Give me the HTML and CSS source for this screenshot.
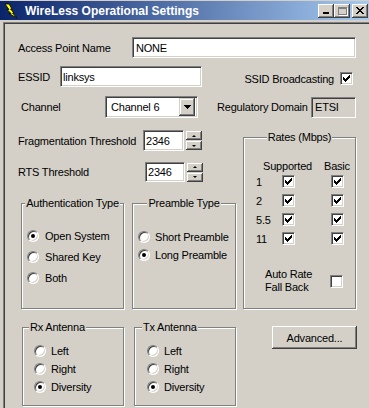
FILE: index.html
```html
<!DOCTYPE html>
<html lang="en">
<head>
    <meta charset="UTF-8">
    <title>WireLess Operational Settings</title>
    <link rel="stylesheet" href="styles.css">
</head>
<body>
    <div class="window">
        <div class="titlebar">
            <svg class="title-icon" width="14" height="16" viewBox="0 0 14 16">
                <polygon points="1,1 5,1 8,6 6.5,6 10,10 8.5,10 13,15 5,10.5 7,10.5 3,6.5 5,6.5" fill="#ffff00" stroke="#000" stroke-width="0.8"/>
            </svg>
            <span class="title">WireLess Operational Settings</span>
            <div class="caption-buttons">
                <div class="caption-btn btn-min"><span class="min-bar"></span></div>
                <div class="caption-btn btn-max"><span class="max-box"></span></div>
                <div class="caption-btn btn-close">
                    <svg width="8" height="7" viewBox="0 0 8 7">
                        <path d="M0 0h2v1h-2z M6 0h2v1h-2z M1 1h2v1h-2z M5 1h2v1h-2z M2 2h4v1h-4z M3 3h2v1h-2z M2 4h4v1h-4z M1 5h2v1h-2z M5 5h2v1h-2z M0 6h2v1h-2z M6 6h2v1h-2z" fill="#000"/>
                    </svg>
                </div>
            </div>
        </div>

        <div class="client">
            <div class="row row-ap">
                <span class="lbl-ap">Access Point Name</span>
                <div class="edit edit-ap">NONE</div>
            </div>

            <div class="row row-essid">
                <span class="lbl-essid">ESSID</span>
                <div class="edit edit-essid">linksys</div>
                <div class="ssid">
                    <span>SSID Broadcasting</span>
                    <span class="check"><svg class="tick" width="7" height="7" viewBox="0 0 7 7"><path d="M0 2h1v3h-1z M1 3h1v3h-1z M2 4h1v3h-1z M3 3h1v3h-1z M4 2h1v3h-1z M5 1h1v3h-1z M6 0h1v3h-1z"/></svg></span>
                </div>
            </div>

            <div class="row row-channel">
                <span class="lbl-channel">Channel</span>
                <div class="combo">
                    <span class="combo-text">Channel 6</span>
                    <span class="combo-btn">
                        <svg width="7" height="4" viewBox="0 0 7 4">
                            <path d="M0 0h7v1h-7z M1 1h5v1h-5z M2 2h3v1h-3z M3 3h1v1h-1z" fill="#000"/>
                        </svg>
                    </span>
                </div>
                <span class="lbl-domain">Regulatory Domain</span>
                <div class="edit edit-domain">ETSI</div>
            </div>

            <div class="lower">
                <div class="left-col">
                    <div class="row row-frag">
                        <span class="lbl-frag">Fragmentation Threshold</span>
                        <div class="edit edit-frag">2346</div>
                        <div class="spinner">
                            <span class="spin-btn spin-up"></span>
                            <span class="spin-btn spin-down"></span>
                        </div>
                    </div>

                    <div class="row row-rts">
                        <span class="lbl-rts">RTS Threshold</span>
                        <div class="edit edit-rts">2346</div>
                        <div class="spinner">
                            <span class="spin-btn spin-up"></span>
                            <span class="spin-btn spin-down"></span>
                        </div>
                    </div>

                    <div class="group-row">
                        <fieldset class="group group-auth">
                            <legend>Authentication Type</legend>
                            <div class="group-body">
                                <div class="radio-row"><span class="radio checked"></span>Open System</div>
                                <div class="radio-row"><span class="radio"></span>Shared Key</div>
                                <div class="radio-row"><span class="radio"></span>Both</div>
                            </div>
                        </fieldset>
                        <fieldset class="group group-preamble">
                            <legend>Preamble Type</legend>
                            <div class="group-body">
                                <div class="radio-row"><span class="radio"></span>Short Preamble</div>
                                <div class="radio-row"><span class="radio checked"></span>Long Preamble</div>
                            </div>
                        </fieldset>
                    </div>

                    <div class="antenna-row">
                        <fieldset class="group group-rx">
                            <legend>Rx Antenna</legend>
                            <div class="group-body">
                                <div class="radio-row"><span class="radio"></span>Left</div>
                                <div class="radio-row"><span class="radio"></span>Right</div>
                                <div class="radio-row"><span class="radio checked"></span>Diversity</div>
                            </div>
                        </fieldset>
                        <fieldset class="group group-tx">
                            <legend>Tx Antenna</legend>
                            <div class="group-body">
                                <div class="radio-row"><span class="radio"></span>Left</div>
                                <div class="radio-row"><span class="radio"></span>Right</div>
                                <div class="radio-row"><span class="radio checked"></span>Diversity</div>
                            </div>
                        </fieldset>
                    </div>
                </div>

                <div class="right-col">
                    <fieldset class="group group-rates">
                        <legend>Rates (Mbps)</legend>
                        <div class="group-body">
                            <div class="rates-head">
                                <span class="head-supported">Supported</span>
                                <span>Basic</span>
                            </div>
                            <div class="rate-row">
                                <span class="rate-num">1</span>
                                <span class="check"><svg class="tick" width="7" height="7" viewBox="0 0 7 7"><path d="M0 2h1v3h-1z M1 3h1v3h-1z M2 4h1v3h-1z M3 3h1v3h-1z M4 2h1v3h-1z M5 1h1v3h-1z M6 0h1v3h-1z"/></svg></span>
                                <span class="check basic"><svg class="tick" width="7" height="7" viewBox="0 0 7 7"><path d="M0 2h1v3h-1z M1 3h1v3h-1z M2 4h1v3h-1z M3 3h1v3h-1z M4 2h1v3h-1z M5 1h1v3h-1z M6 0h1v3h-1z"/></svg></span>
                            </div>
                            <div class="rate-row">
                                <span class="rate-num">2</span>
                                <span class="check"><svg class="tick" width="7" height="7" viewBox="0 0 7 7"><path d="M0 2h1v3h-1z M1 3h1v3h-1z M2 4h1v3h-1z M3 3h1v3h-1z M4 2h1v3h-1z M5 1h1v3h-1z M6 0h1v3h-1z"/></svg></span>
                                <span class="check basic"><svg class="tick" width="7" height="7" viewBox="0 0 7 7"><path d="M0 2h1v3h-1z M1 3h1v3h-1z M2 4h1v3h-1z M3 3h1v3h-1z M4 2h1v3h-1z M5 1h1v3h-1z M6 0h1v3h-1z"/></svg></span>
                            </div>
                            <div class="rate-row">
                                <span class="rate-num">5.5</span>
                                <span class="check"><svg class="tick" width="7" height="7" viewBox="0 0 7 7"><path d="M0 2h1v3h-1z M1 3h1v3h-1z M2 4h1v3h-1z M3 3h1v3h-1z M4 2h1v3h-1z M5 1h1v3h-1z M6 0h1v3h-1z"/></svg></span>
                                <span class="check basic"><svg class="tick" width="7" height="7" viewBox="0 0 7 7"><path d="M0 2h1v3h-1z M1 3h1v3h-1z M2 4h1v3h-1z M3 3h1v3h-1z M4 2h1v3h-1z M5 1h1v3h-1z M6 0h1v3h-1z"/></svg></span>
                            </div>
                            <div class="rate-row">
                                <span class="rate-num">11</span>
                                <span class="check"><svg class="tick" width="7" height="7" viewBox="0 0 7 7"><path d="M0 2h1v3h-1z M1 3h1v3h-1z M2 4h1v3h-1z M3 3h1v3h-1z M4 2h1v3h-1z M5 1h1v3h-1z M6 0h1v3h-1z"/></svg></span>
                                <span class="check basic"><svg class="tick" width="7" height="7" viewBox="0 0 7 7"><path d="M0 2h1v3h-1z M1 3h1v3h-1z M2 4h1v3h-1z M3 3h1v3h-1z M4 2h1v3h-1z M5 1h1v3h-1z M6 0h1v3h-1z"/></svg></span>
                            </div>
                            <div class="fallback">
                                <span class="fallback-text">Auto Rate<br>Fall Back</span>
                                <span class="check"></span>
                            </div>
                        </div>
                    </fieldset>
                    <div class="button btn-advanced">Advanced...</div>
                </div>
            </div>
        </div>
    </div>
</body>
</html>
```

FILE: styles.css
```css
* {
    box-sizing: border-box;
}

body {
    margin: 0;
    background: #d4d0c8;
    font-family: "Liberation Sans", Arial, sans-serif;
    font-size: 11px;
    letter-spacing: -0.2px;
    color: #000;
    overflow: hidden;
}

.window {
    width: 369px;
    height: 408px;
    padding-top: 1px;
}

/* title bar */

.titlebar {
    height: 19px;
    display: flex;
    align-items: center;
    padding: 0 1px 0 4px;
    background: linear-gradient(to right, #0a246a, #a6caf0);
}

.title-icon {
    flex: none;
}

.title {
    margin-left: 7px;
    color: #fff;
    font-weight: bold;
    font-size: 12px;
    letter-spacing: 0;
}

.caption-buttons {
    margin-left: auto;
    display: flex;
}

.caption-btn {
    width: 16px;
    height: 14px;
    background: #d4d0c8;
    box-shadow: inset -1px -1px #404040, inset 1px 1px #fff, inset -2px -2px #808080, inset 2px 2px #d4d0c8;
    display: flex;
    align-items: center;
    justify-content: center;
}

.btn-close {
    margin-left: 2px;
}

.min-bar {
    width: 6px;
    height: 2px;
    background: #000;
    margin-top: 5px;
    margin-right: 1px;
}

.max-box {
    width: 9px;
    height: 8px;
    border: 1px solid #808080;
    border-top-width: 2px;
    box-shadow: 1px 1px 0 #fff;
}

/* client area */

.client {
    margin: 2px 0 0 3px;
    height: 386px;
    border-top: 1px solid #808080;
    border-left: 1px solid #808080;
    box-shadow: inset 1px 1px #404040;
    padding-left: 14px;
}

.row {
    display: flex;
    align-items: center;
    white-space: nowrap;
}

.row-ap,
.row-essid,
.row-channel {
    width: 338px;
}

.row-ap {
    margin-top: 14px;
    height: 21px;
}

.lbl-ap {
    width: 114px;
}

.edit {
    height: 21px;
    background: #fff;
    border: 1px solid;
    border-color: #808080 #fff #fff #808080;
    box-shadow: inset 1px 1px #404040, inset -1px -1px #d4d0c8;
    padding: 0 3px;
    display: flex;
    align-items: center;
    flex: none;
}

.edit-ap {
    width: 224px;
}

.row-essid {
    margin-top: 8px;
    height: 21px;
}

.lbl-essid {
    width: 42px;
}

.edit-essid {
    width: 142px;
    padding-left: 2px;
}

.ssid {
    margin-left: auto;
    margin-right: 3px;
    margin-top: 4px;
    display: flex;
    align-items: center;
    gap: 6px;
}

.row-channel {
    margin-top: 9px;
    height: 22px;
}

.lbl-channel {
    width: 87px;
    padding-left: 3px;
}

.combo {
    width: 93px;
    height: 22px;
    flex: none;
    display: flex;
    align-items: center;
    justify-content: space-between;
    padding: 2px;
    background: #fff;
    border: 1px solid;
    border-color: #808080 #fff #fff #808080;
    box-shadow: inset 1px 1px #404040, inset -1px -1px #d4d0c8;
}

.combo-text {
    padding-left: 3px;
}

.combo-btn {
    width: 16px;
    height: 18px;
    background: #d4d0c8;
    box-shadow: inset -1px -1px #404040, inset 1px 1px #d4d0c8, inset -2px -2px #808080, inset 2px 2px #fff;
    display: flex;
    align-items: center;
    justify-content: center;
}

.lbl-domain {
    margin-left: 19px;
}

.edit-domain {
    margin-left: auto;
    width: 45px;
    background: #d4d0c8;
}

/* lower part */

.lower {
    display: flex;
}

.left-col {
    width: 218px;
}

.row-frag {
    margin-top: 12px;
    height: 21px;
}

.lbl-frag {
    width: 125px;
}

.edit-frag {
    width: 41px;
    padding-left: 2px;
}

.row-rts {
    margin-top: 11px;
    height: 20px;
}

.lbl-rts {
    width: 127px;
}

.edit-rts {
    width: 40px;
    height: 20px;
    padding-left: 2px;
}

.spinner {
    margin-left: 2px;
    display: flex;
    flex-direction: column;
    gap: 1px;
}

.spin-btn {
    width: 16px;
    height: 9px;
    background: #d4d0c8;
    box-shadow: inset -1px -1px #404040, inset 1px 1px #fff, inset -2px -2px #808080;
    display: flex;
    align-items: center;
    justify-content: center;
}

.spin-btn::after {
    content: "";
    border-left: 2px solid transparent;
    border-right: 2px solid transparent;
}

.spin-up::after {
    border-bottom: 2px solid #000;
}

.spin-down::after {
    border-top: 2px solid #000;
}

/* group boxes */

.group {
    margin: 0;
    padding: 0;
    min-width: 0;
    border: 1px solid #808080;
    box-shadow: inset 1px 1px #fff, 1px 1px #fff;
}

.group legend {
    padding: 0 1px;
    line-height: 13px;
    background: #d4d0c8;
    white-space: nowrap;
}

.group-auth legend,
.group-preamble legend,
.group-rates legend {
    margin: 0 auto;
}

.group-row {
    display: flex;
    margin-top: 15px;
}

.group-auth {
    margin-left: 3px;
    width: 103px;
    height: 112px;
}

.group-auth .group-body {
    padding: 15px 0 0 5px;
}

.group-preamble {
    margin-left: 8px;
    width: 104px;
    height: 112px;
}

.group-preamble .group-body {
    padding: 18px 0 0 5px;
}

.radio-row {
    display: flex;
    align-items: center;
    height: 21px;
    white-space: nowrap;
}

.group-preamble .radio-row {
    height: 18px;
}

.radio {
    width: 12px;
    height: 12px;
    flex: none;
    margin-right: 5px;
    border-radius: 50%;
    background: #fff;
    border: 1px solid;
    border-color: #808080 #fff #fff #808080;
    box-shadow: inset 1px 1px #404040, inset -1px -1px #d4d0c8;
    display: flex;
    align-items: center;
    justify-content: center;
}

.group-auth .radio {
    margin-right: 6px;
}

.radio.checked::after {
    content: "";
    width: 4px;
    height: 4px;
    border-radius: 50%;
    background: #000;
}

.antenna-row {
    display: flex;
    margin-top: 12px;
}

.group-rx,
.group-tx {
    width: 102px;
    height: 85px;
}

.group-rx {
    margin-left: 4px;
}

.group-tx {
    margin-left: 10px;
}

.group-rx legend {
    margin-left: 6px;
}

.group-tx legend {
    margin-left: 7px;
}

.group-rx .group-body {
    padding: 8px 0 0 11px;
}

.group-tx .group-body {
    padding: 8px 0 0 12px;
}

.group-rx .radio-row,
.group-tx .radio-row {
    height: 18px;
}

/* rates */

.right-col {
    margin-left: 7px;
    width: 113px;
}

.group-rates {
    margin-top: 13px;
    width: 113px;
    height: 178px;
}

.group-rates .group-body {
    padding-top: 15px;
}

.rates-head {
    display: flex;
    height: 13px;
    align-items: center;
    padding-left: 19px;
}

.head-supported {
    width: 61px;
}

.rate-row {
    display: flex;
    align-items: center;
    height: 19px;
    padding-left: 12px;
}

.rate-num {
    width: 26px;
}

.check {
    width: 13px;
    height: 13px;
    flex: none;
    background: #fff;
    border: 1px solid;
    border-color: #808080 #fff #fff #808080;
    box-shadow: inset 1px 1px #404040, inset -1px -1px #d4d0c8;
    display: flex;
    align-items: center;
    justify-content: center;
}

.tick {
    display: block;
    fill: #000;
}

.check.basic {
    margin-left: 36px;
}

.fallback {
    margin-top: 20px;
    padding-left: 21px;
    display: flex;
    align-items: center;
}

.fallback-text {
    width: 65px;
    line-height: 13px;
}

/* buttons */

.button {
    background: #d4d0c8;
    box-shadow: inset -1px -1px #404040, inset 1px 1px #fff, inset -2px -2px #808080, inset 2px 2px #d4d0c8;
    display: flex;
    align-items: center;
    justify-content: center;
}

.btn-advanced {
    margin: 17px 0 0 29px;
    width: 85px;
    height: 23px;
}
```
